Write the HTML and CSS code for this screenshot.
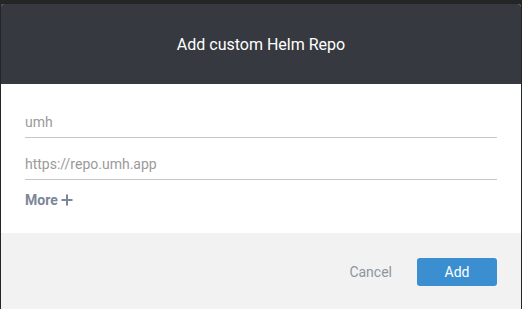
FILE: index.html
```html
<!DOCTYPE html>
<html lang="en">
<head>
    <meta charset="UTF-8">
    <title>Add custom Helm Repo</title>
    <link rel="stylesheet" href="styles.css">
</head>
<body>

    <div class="modal">

        <header class="modal-header">
            Add custom Helm Repo
        </header>

        <main class="modal-body">
            <div class="field">
                <input type="text" placeholder="umh">
            </div>
            <div class="field">
                <input type="text" placeholder="https://repo.umh.app">
            </div>
            <button class="btn-more">
                More
                <svg width="12" height="12" viewBox="0 0 12 12">
                    <path d="M6 0.5v11M0.5 6h11" stroke="currentColor" stroke-width="2"/>
                </svg>
            </button>
        </main>

        <footer class="modal-footer">
            <button class="btn-cancel">Cancel</button>
            <button class="btn-add">Add</button>
        </footer>

    </div>

</body>
</html>
```

FILE: styles.css
```css
/* Basic setup */
:root {
    --header-bg: #363a40;
    --footer-bg: #f2f2f2;
    --line-color: #c6c6ca;
    --muted-text: #9a9a9a;
    --link-color: #7b8798;
    --primary: #3b8fd0;
}

* {
    margin: 0;
    padding: 0;
    box-sizing: border-box;
}

html, body {
    height: 100%;
    overflow: hidden;
    font-family: Roboto, 'Liberation Sans', sans-serif;
}

body {
    background-color: #232527;
    padding: 4px 1px 0 1px;
}

/* Dialog */
.modal {
    display: flex;
    flex-direction: column;
    width: 520px;
    height: 320px;
    background-color: #ffffff;
    border-radius: 3px 3px 0 0;
    overflow: hidden;
}

.modal-header {
    height: 80px;
    flex-shrink: 0;
    background-color: var(--header-bg);
    color: #ffffff;
    display: flex;
    align-items: center;
    justify-content: center;
    font-size: 16px;
}

.modal-body {
    height: 149px;
    flex-shrink: 0;
    padding: 17px 24px 0 24px;
    display: flex;
    flex-direction: column;
    gap: 5px;
}

.field input {
    width: 100%;
    height: 37px;
    border: none;
    border-bottom: 1px solid var(--line-color);
    padding: 6px 0 0 0;
    font-family: inherit;
    font-size: 14px;
    color: #555;
    outline: none;
    background: transparent;
}

.field input::placeholder {
    color: var(--muted-text);
}

.btn-more {
    align-self: flex-start;
    margin-top: 7px;
    display: flex;
    align-items: center;
    gap: 3px;
    border: none;
    background: none;
    font-family: inherit;
    font-size: 14px;
    font-weight: 700;
    line-height: 16px;
    color: var(--link-color);
    cursor: pointer;
}

/* Footer with actions */
.modal-footer {
    flex-grow: 1;
    background-color: var(--footer-bg);
    display: flex;
    justify-content: flex-end;
    align-items: flex-start;
    gap: 25px;
    padding: 25px 24px 0 0;
}

.modal-footer button {
    height: 28px;
    border: none;
    font-family: inherit;
    font-size: 14px;
    cursor: pointer;
}

.btn-cancel {
    background: none;
    color: #8e959e;
}

.btn-add {
    width: 80px;
    border-radius: 3px;
    background-color: var(--primary);
    color: #ffffff;
}
```
